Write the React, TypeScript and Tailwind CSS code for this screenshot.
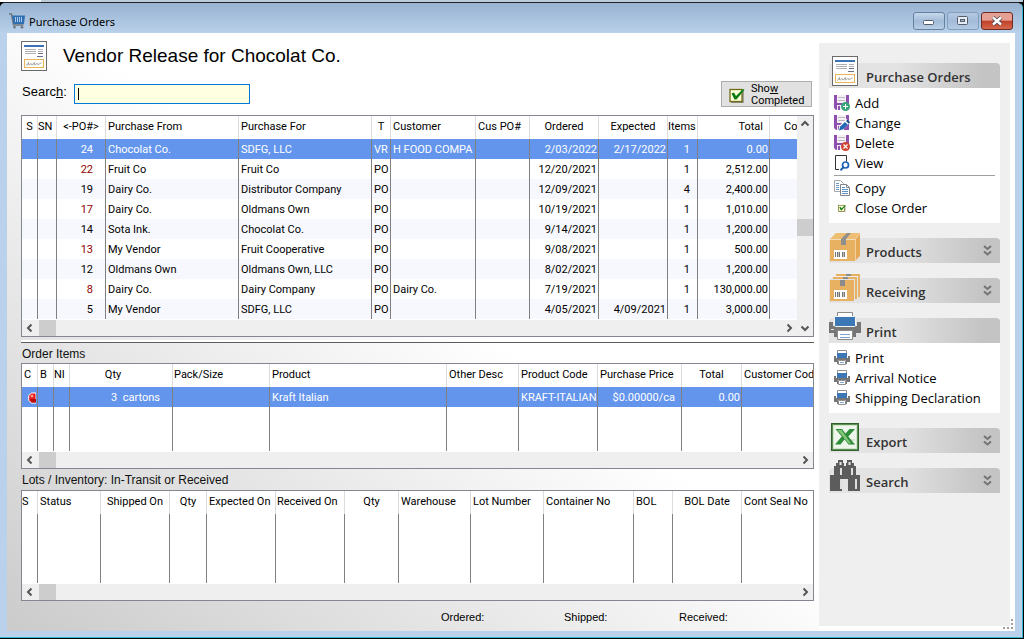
import { useState, type ReactNode } from "react";

type Column = {
  label: string;
  width?: number;
  head?: string;
  cell?: string;
};

const orderColumns: Column[] = [
  { label: "S", width: 16, head: "text-center" },
  { label: "SN", width: 19, head: "px-0" },
  { label: "<-PO#>", width: 49, head: "text-center", cell: "text-right pr-3" },
  { label: "Purchase From", width: 133 },
  { label: "Purchase For", width: 133 },
  { label: "T", width: 19, head: "text-center" },
  { label: "Customer", width: 85 },
  { label: "Cus PO#", width: 54 },
  { label: "Ordered", width: 69, head: "text-center", cell: "text-right pr-px" },
  { label: "Expected", width: 69, head: "text-center", cell: "text-right pr-px" },
  { label: "Items", width: 30, head: "px-0", cell: "text-right pr-[7px]" },
  { label: "Total", width: 72, head: "text-right pr-[6px]", cell: "text-right pr-px" },
  { label: "Co", head: "pl-[14px] pr-0" },
];

const orderRows: string[][] = [
  ["", "", "24", "Chocolat Co.", "SDFG, LLC", "VR", "H FOOD COMPA", "", "2/03/2022", "2/17/2022", "1", "0.00", ""],
  ["", "", "22", "Fruit Co", "Fruit Co", "PO", "", "", "12/20/2021", "", "1", "2,512.00", ""],
  ["", "", "19", "Dairy Co.", "Distributor Company", "PO", "", "", "12/09/2021", "", "4", "2,400.00", ""],
  ["", "", "17", "Dairy Co.", "Oldmans Own", "PO", "", "", "10/19/2021", "", "1", "1,010.00", ""],
  ["", "", "14", "Sota Ink.", "Chocolat Co.", "PO", "", "", "9/14/2021", "", "1", "1,200.00", ""],
  ["", "", "13", "My Vendor", "Fruit Cooperative", "PO", "", "", "9/08/2021", "", "1", "500.00", ""],
  ["", "", "12", "Oldmans Own", "Oldmans Own, LLC", "PO", "", "", "8/02/2021", "", "1", "1,200.00", ""],
  ["", "", "8", "Dairy Co.", "Dairy Company", "PO", "Dairy Co.", "", "7/19/2021", "", "1", "130,000.00", ""],
  ["", "", "5", "My Vendor", "SDFG, LLC", "PO", "", "", "4/05/2021", "4/09/2021", "1", "3,000.00", ""],
];

const itemColumns: Column[] = [
  { label: "C", width: 16 },
  { label: "B", width: 16 },
  { label: "NI", width: 16, head: "px-0" },
  { label: "Qty", width: 103, head: "text-center pr-4", cell: "text-right pr-3" },
  { label: "Pack/Size", width: 97, head: "px-px" },
  { label: "Product", width: 177 },
  { label: "Other Desc", width: 72 },
  { label: "Product Code", width: 79 },
  { label: "Purchase Price", width: 84, cell: "text-right pr-[6px]" },
  { label: "Total", width: 60, head: "text-center", cell: "text-right pr-px" },
  { label: "Customer Code", head: "pl-[2px] pr-0" },
];

const itemRows: ReactNode[][] = [
  [<RedLight key="c" />, "", "", "3  cartons", "", "Kraft Italian", "", "KRAFT-ITALIAN", "$0.00000/ca", "0.00", ""],
];

const lotColumns: Column[] = [
  { label: "S", width: 16, head: "px-0" },
  { label: "Status", width: 63 },
  { label: "Shipped On", width: 69, head: "text-center" },
  { label: "Qty", width: 37, head: "text-center" },
  { label: "Expected On", width: 69 },
  { label: "Received On", width: 69, head: "px-px" },
  { label: "Qty", width: 54, head: "text-center" },
  { label: "Warehouse", width: 72 },
  { label: "Lot Number", width: 73 },
  { label: "Container No", width: 90 },
  { label: "BOL", width: 39 },
  { label: "BOL Date", width: 69, head: "text-center" },
  { label: "Cont Seal No" },
];

function RedLight() {
  return (
    <svg viewBox="0 0 8 12" className="ml-1 block h-3 w-2" aria-hidden="true">
      <path d="M8 1H3.500L.700 3.500v5L3.500 11H8z" fill="#e01818" stroke="#ffffff" />
      <path d="M1.500 7H8v3.500H4z" fill="#b50d0d" />
      <circle cx="4" cy="4" r="1.500" fill="#ff9a90" />
    </svg>
  );
}

function DocIcon() {
  return (
    <svg viewBox="0 0 26 30" className="h-[30px] w-[26px]" aria-hidden="true">
      <rect x=".5" y=".5" width="25" height="29" fill="#fff" stroke="#6b6b6b" />
      <rect x="3" y="4" width="20" height="2" fill="#3a74b4" />
      <path d="M4 8.5h11M4 10.5h11M4 12.5h11M17 8.5h5M17 10.5h5" stroke="#b0b0b0" />
      <path d="M17 12.5h5M16 15.5h6" stroke="#6c6f88" />
      <rect x="3.5" y="18.5" width="19" height="8" fill="#fffefa" stroke="#e8b45a" />
      <path
        d="M5 24.5c2-1 3-3 2.500-3s-.5 2.500.5 2.500 1.500-1.500 2-1.500 0 1.500 1 1.500 1.500-2.500 2.500-2.500-1 2.500 0 2.500 1.500-1.500 2.500-1.500 0 1 1 1 2-1.500 3.500-1.500"
        fill="none"
        stroke="#777"
        strokeWidth=".7"
      />
    </svg>
  );
}

function CartIcon() {
  return (
    <svg viewBox="0 0 16 16" className="h-4 w-4" aria-hidden="true">
      <path d="M0 1h2.500l2 11h10" fill="none" stroke="#70757c" strokeWidth="1.400" />
      <path d="M3 2.500h13l-1 8.500H4.500z" fill="#2f6eb0" />
      <path d="M6.500 4v5M8.500 4v5M10.500 4v5M12.500 4v5" stroke="#a9cbee" strokeWidth="1" />
      <circle cx="5.5" cy="14.200" r="1.300" fill="#70757c" />
      <circle cx="13" cy="14.200" r="1.300" fill="#70757c" />
    </svg>
  );
}

function CheckIcon({ className }: { className: string }) {
  return (
    <svg viewBox="0 0 16 16" className={className} aria-hidden="true">
      <path d="M14 4v11.500H2" fill="none" stroke="#8a8a80" strokeWidth="1.500" />
      <rect x="1" y="2.5" width="12" height="12" fill="#ffffdc" stroke="#6e6a18" strokeWidth="1.300" />
      <path d="M2.500 6.500 5 5.500l2 3.500 7-7 1.500.800L7.500 12.500h-2z" fill="#0b7d12" />
    </svg>
  );
}

function DiskIcon({ badge }: { badge: "add" | "edit" | "remove" }) {
  return (
    <svg viewBox="0 0 16 16" className="h-4 w-4" aria-hidden="true">
      <path d="M0 0h15v15H2l-2-2z" fill="#8e4fae" />
      <rect x="3" y="0" width="9" height="8" fill="#f4f0f6" />
      <path d="M4 2.500h7M4 5.500h7" stroke="#bdb8c0" />
      <rect x="3" y="10" width="7" height="5" fill="#f4f0f6" />
      <rect x="4" y="11" width="2" height="4" fill="#8e4fae" />
      {badge === "add" && (
        <>
          <circle cx="11.5" cy="11.5" r="4.500" fill="#3aa578" />
          <path d="M11.5 9v5M9 11.5h5" stroke="#fff" />
        </>
      )}
      {badge === "remove" && (
        <>
          <circle cx="11.5" cy="11.5" r="4.500" fill="#d0452f" />
          <path d="m9.500 9.500 4 4M13.500 9.500l-4 4" stroke="#fff" strokeWidth="1.200" />
        </>
      )}
      {badge === "edit" && (
        <>
          <path d="m4 16 1.500-5.500L12.500 4 16 7.500 9.500 14z" fill="#fff" />
          <path d="m5 15.500 1.200-4L11 7l2.800 2.800-4.600 4.500z" fill="#2268b4" />
          <path d="M12 6l1.500-1.500 2.500 2.800L14.800 8.800z" fill="#174c86" />
        </>
      )}
    </svg>
  );
}

function ViewIcon() {
  return (
    <svg viewBox="0 0 16 16" className="h-4 w-4" aria-hidden="true">
      <path d="M5 14.500H1.500V.5h11v6" fill="#fff" stroke="#333" />
      <circle cx="11.5" cy="10" r="3" fill="#fff" stroke="#1c62b8" strokeWidth="1.700" />
      <path d="m9.500 12.200-3 3" stroke="#1c62b8" strokeWidth="2" />
    </svg>
  );
}

function CopyIcon() {
  return (
    <svg viewBox="0 0 16 16" className="h-4 w-4" aria-hidden="true">
      <path d="M.5.5h6l3 3v8h-9z" fill="#fff" stroke="#a5a8ac" />
      <path d="M2 3.500h3M2 5.500h3M2 7.500h3M2 9.500h3" stroke="#6b9ccc" />
      <path d="M6.500 4.500h6l3 3v8h-9z" fill="#fff" stroke="#80858b" />
      <path d="M12.500 4.500v3h3" fill="none" stroke="#80858b" />
      <path d="M8 7.500h3M8 9.500h6M8 11.500h6M8 13.500h6" stroke="#5b90c6" />
    </svg>
  );
}

function PrinterIcon() {
  return (
    <svg viewBox="0 0 32 30" className="h-[30px] w-8" aria-hidden="true">
      <path d="M0 11h4v5h24v-5h4v11h-5v4h-3v-6H8v6H5v-4H0z" fill="#767676" />
      <path d="M0 15h32v7H0z" fill="#767676" />
      <path d="M8.500 6V1.500h15V6z" fill="#fff" stroke="#8a8a8a" />
      <rect x="5.500" y="5.500" width="21" height="10" rx="1" fill="#3b78b5" stroke="#f6f6f6" />
      <path d="M8.500 19.500h15v9h-15z" fill="#fff" stroke="#8a8a8a" />
      <path d="M11 23.500h10M11 26.500h10" stroke="#7ea6cf" />
      <rect x="2" y="18" width="3" height="1" fill="#e0e0e0" />
    </svg>
  );
}

function SmallPrinterIcon() {
  return (
    <svg viewBox="0 0 16 16" className="h-4 w-4" aria-hidden="true">
      <path d="M0 6h2v2h12V6h2v6h-3v2h-1v-4H4v4H3v-2H0z" fill="#767676" />
      <path d="M3.500 4V.5h9V4" fill="#fff" stroke="#8f8f8f" />
      <rect x="3" y="3" width="10" height="5" fill="#3b78b5" />
      <path d="M4.500 10.500h7v4h-7z" fill="#fff" stroke="#8f8f8f" />
      <path d="M6 12.500h4" stroke="#7ea6cf" />
    </svg>
  );
}

function Barcode() {
  return (
    <>
      <rect x="4" y="17" width="13" height="9" fill="#fff" />
      <path d="M5.5 19v5M7.500 19v5M9.500 19v5M12.500 19v5M14.500 19v5" stroke="#777" />
      <path d="M8.500 19v5M13.500 19v5" stroke="#bbb" />
    </>
  );
}

function BoxIcon() {
  return (
    <svg viewBox="0 0 30 28" className="h-7 w-[30px]" aria-hidden="true">
      <path d="M0 6 6 0h24l-5 6z" fill="#edbd72" />
      <path d="m25 6 5-6v23l-5 5z" fill="#e3a957" />
      <path d="M0 6.500h25M25.500 6v22M25.500 6l4-5" fill="none" stroke="#f6dcae" strokeWidth=".800" />
      <path d="M0 7h25v21H0z" fill="#e7b161" />
      <path d="m11 6 6-6h4l-5 6v6h-5z" fill="#8f8f8f" />
      <Barcode />
    </svg>
  );
}

function BoxesIcon() {
  return (
    <svg viewBox="0 0 30 28" className="h-7 w-[30px]" aria-hidden="true">
      <path d="M6 1h24v23h-2V3H6z" fill="#e7b161" />
      <path d="M3 4h24v22h-2V6H3z" fill="#e7b161" />
      <path d="M16 1h5v2h-5zM13 4h5v2h-5z" fill="#8b8b8b" />
      <rect y="7" width="24" height="21" fill="#e7b161" />
      <rect x="10" y="7" width="5" height="6" fill="#8b8b8b" />
      <Barcode />
    </svg>
  );
}

function ExcelIcon() {
  return (
    <svg viewBox="0 0 28 28" className="h-7 w-7" aria-hidden="true">
      <rect x=".5" y=".5" width="27" height="27" fill="#5b8f54" stroke="#2f5f2c" />
      <rect x="2.500" y="2.500" width="23" height="23" fill="#eef5eb" stroke="#cfe3c9" />
      <path d="M17 16h7v2h-7zM17 20h7v2h-7z" fill="#d6e4d2" />
      <path d="M4.500 6h6.500l3.500 4.500L18.500 6H24l-6.700 7.500L24 21.500h-6.500l-4-5-4 5H4l6.800-8z" fill="#2f8d3a" />
      <path d="M6.500 7h4l9.500 13.500h-2.500z" fill="#83c57a" />
    </svg>
  );
}

function BinocularsIcon() {
  return (
    <svg viewBox="0 0 30 31" className="h-[31px] w-[30px]" aria-hidden="true">
      <path
        d="M8 0h5v3h1v3h2V3h1V0h5v3h2v3h2v9h4v16H18V19h-6v12H0V15h4V6h2V3h2z"
        fill="#5c5c5c"
      />
      <path d="M9.500 2h2v3h-2zM18.500 2h2v3h-2z" fill="#e8e8e8" />
      <path d="M11 8v7M22 8v7M11 19v10M26 19v10" stroke="#fff" strokeWidth="1.600" />
    </svg>
  );
}

function DoubleChevron() {
  return (
    <svg viewBox="0 0 9 12" className="h-3 w-[9px]" aria-hidden="true">
      <path d="m1 1 3.500 3L8 1M1 6.500l3.500 3L8 6.500" fill="none" stroke="#747474" strokeWidth="2" />
    </svg>
  );
}

const arrowPaths = {
  left: "M6.5 1.500 3 5l3.500 3.500",
  right: "M3.500 1.500 7 5 3.500 8.500",
  up: "M1.500 6.500 5 3l3.500 3.500",
  down: "M1.500 3.500 5 7l3.500-3.500",
};

function ArrowButton({ direction }: { direction: keyof typeof arrowPaths }) {
  return (
    <button type="button" aria-label={`Scroll ${direction}`} className="flex h-4 w-4 items-center justify-center">
      <svg viewBox="0 0 10 10" className="h-[10px] w-[10px]" aria-hidden="true">
        <path d={arrowPaths[direction]} fill="none" stroke="#555" strokeWidth="2" />
      </svg>
    </button>
  );
}

type GridProps = {
  label: string;
  columns: Column[];
  rows: ReactNode[][];
  filler?: string;
  vertical?: boolean;
};

function DataGrid({ label, columns, rows, filler, vertical }: GridProps) {
  const [selected, setSelected] = useState(0);
  const last = columns.length - 1;
  const bodyLine = (i: number) => (i < last ? "border-r border-[#808080]" : "");
  return (
    <div className="flex border border-[#828790] bg-white">
      <div className="flex min-w-0 flex-1 flex-col">
        <table
          aria-label={label}
          className="w-full table-fixed border-separate border-spacing-0 font-[Roboto,sans-serif] text-[11px] text-black"
        >
          <colgroup>
            {columns.map((column, i) => (
              <col key={i} style={column.width ? { width: column.width } : undefined} />
            ))}
          </colgroup>
          <thead>
            <tr className="h-[23px]">
              {columns.map((column, i) => (
                <th
                  key={i}
                  scope="col"
                  className={`overflow-hidden whitespace-nowrap py-0 font-normal ${
                    i < last ? "border-r border-[#dcdcdc]" : ""
                  } ${column.head?.includes("text-") ? "" : "text-left"} ${column.head ?? ""} ${
                    column.head?.includes("p") ? "" : "px-[2px]"
                  }`}
                >
                  {column.label}
                </th>
              ))}
            </tr>
          </thead>
          <tbody>
            {rows.map((row, r) => {
              const active = r === selected;
              return (
                <tr
                  key={r}
                  aria-selected={active}
                  onClick={() => setSelected(r)}
                  className={active ? "bg-[#6495ed] text-white" : r % 2 === 0 ? "bg-[#f7f8fe]" : "bg-white"}
                >
                  {row.map((value, i) => (
                    <td
                      key={i}
                      className={`h-5 overflow-hidden whitespace-pre px-[2px] pb-0 pt-[2px] leading-[18px] ${bodyLine(i)} ${
                        columns[i].cell ?? ""
                      } ${columns[i].label === "<-PO#>" && r % 2 === 1 && !active ? "text-[#900000]" : ""}`}
                    >
                      {value}
                    </td>
                  ))}
                </tr>
              );
            })}
            {filler && (
              <tr className={filler}>
                {columns.map((_, i) => (
                  <td key={i} className={`p-0 ${bodyLine(i)}`} />
                ))}
              </tr>
            )}
          </tbody>
        </table>
        <div className="mt-px flex h-4 items-center bg-[#efefef]">
          <ArrowButton direction="left" />
          <div className="ml-px h-full w-[17px] bg-[#cdcdcd]" />
          <div className="flex-1" />
          <ArrowButton direction="right" />
        </div>
      </div>
      {vertical && (
        <div className="flex w-4 flex-col bg-[#efefef]">
          <ArrowButton direction="up" />
          <div className="flex-[86]" />
          <div className="h-[17px] bg-[#cdcdcd]" />
          <div className="flex-[84]" />
          <ArrowButton direction="down" />
        </div>
      )}
    </div>
  );
}

function Section({ title, icon, children }: { title: string; icon: ReactNode; children?: ReactNode }) {
  return (
    <section>
      <h2 className="relative">
        <button
          type="button"
          className="flex h-[25px] w-full items-center justify-between rounded-t-[4px] bg-linear-to-r from-[#e3e3e3] from-40% to-[#c4c4c4] to-90% pl-[37px] pr-2 text-left text-[13px] font-semibold text-[#333]"
        >
          <span className="pt-1">{title}</span>
          {!children && <DoubleChevron />}
        </button>
        <span className="pointer-events-none absolute bottom-[2px] left-0 flex w-8 justify-center">{icon}</span>
      </h2>
      {children && <div className="bg-white px-[5px] py-[5px]">{children}</div>}
    </section>
  );
}

function Action({ icon, label }: { icon: ReactNode; label: string }) {
  return (
    <button type="button" className="flex h-5 w-full items-center gap-[5px] text-left text-[13px] leading-5 text-black">
      <span className="flex w-4 justify-center">{icon}</span>
      {label}
    </button>
  );
}

function WindowButton({ label, tone, children }: { label: string; tone: string; children: ReactNode }) {
  return (
    <button
      type="button"
      aria-label={label}
      className={`flex h-[18px] w-8 items-center justify-center rounded-[3px] border ${tone}`}
    >
      {children}
    </button>
  );
}

export default function App() {
  const [query, setQuery] = useState("");
  return (
    <div className="flex min-h-screen flex-col bg-black pb-px pr-px font-['Liberation_Sans',Arial,sans-serif]">
      <div className="flex h-[2px] bg-[#bccbd9]">
        <div className="w-[41px] bg-white" />
      </div>
      <div className="flex flex-1 flex-col rounded-t-[6px] border border-l-0 border-b-[#35b8d0] border-r-[#35b8d0] border-t-[#222] bg-[#b9d1ea]">
        <header className="flex h-[30px] items-center rounded-t-[5px] bg-linear-to-b from-[#98b2d1] to-[#b9d1ea] pl-[9px] pr-[9px] pt-[6px]">
          <CartIcon />
          <h1 className="ml-1 flex-1 pt-px font-['Noto_Sans',sans-serif] text-[11px] leading-4 text-black">Purchase Orders</h1>
          <div className="flex gap-[2px]">
            <WindowButton label="Minimize" tone="border-[#66809f] bg-linear-to-b from-[#c6d8ec] via-[#a3bbd8] to-[#b9cfe6]">
              <svg viewBox="0 0 12 6" className="mt-1 h-[6px] w-3" aria-hidden="true">
                <rect x=".5" y=".5" width="10" height="4" rx="1" fill="#fff" stroke="#555c68" />
              </svg>
            </WindowButton>
            <WindowButton label="Restore" tone="border-[#839dbd] bg-linear-to-b from-[#b5cae2] via-[#a3bbd8] to-[#b3cae4]">
              <svg viewBox="0 0 12 10" className="h-[10px] w-3" aria-hidden="true">
                <rect x=".5" y=".5" width="10" height="8" rx="1" fill="#e6edf5" stroke="#555c68" />
                <rect x="3.500" y="3.500" width="4" height="2" fill="#a3bbd8" stroke="#555c68" />
              </svg>
            </WindowButton>
            <WindowButton label="Close" tone="border-[#6e2a24] bg-linear-to-b from-[#e5a093] from-45% via-[#bf4028] via-50% to-[#d5684b]">
              <svg viewBox="0 0 12 10" className="h-[10px] w-3" aria-hidden="true">
                <path d="m2 1.500 8 7M10 1.500l-8 7" stroke="#4a4550" strokeWidth="4" />
                <path d="m2 1.500 8 7M10 1.500l-8 7" stroke="#fff" strokeWidth="2.400" />
              </svg>
            </WindowButton>
          </div>
        </header>

        <div className="relative mb-[6px] ml-[7px] mr-[7px] flex flex-1 bg-[linear-gradient(36deg,#cbcbcb_0px,#ffffff_523px)]">
          <main className="min-w-0 flex-1 pl-[14px] pr-[5px] pt-2">
            <div className="flex items-center gap-4">
              <DocIcon />
              <h2 className="text-[19px] leading-7 text-black">Vendor Release for Chocolat Co.</h2>
            </div>

            <div className="mt-[10px] flex h-[26px] items-center">
              <label htmlFor="search" className="w-[53px] pb-1 pl-px text-[13px] leading-4 text-black">
                Searc<span className="underline">h</span>:
              </label>
              <div className="relative">
                <input
                  id="search"
                  type="text"
                  value={query}
                  onChange={(event) => setQuery(event.target.value)}
                  className="block h-5 w-[176px] border border-[#0078d7] bg-[#ffffe1] px-1 text-xs outline-none"
                />
                {query === "" && <span className="pointer-events-none absolute left-1 top-1 h-3 w-px bg-black" />}
              </div>
              <button
                type="button"
                className="ml-auto mr-[2px] flex h-[26px] w-[91px] items-center gap-[6px] border border-[#adadad] bg-[#e1e1e1] pl-[7px] pt-[2px] text-left font-[Roboto,sans-serif] text-[11px] leading-3 text-black"
              >
                <CheckIcon className="h-4 w-4" />
                <span>
                  Sho<span className="underline">w</span>
                  <br />
                  Completed
                </span>
              </button>
            </div>

            <div className="mt-2">
              <DataGrid label="Purchase orders" columns={orderColumns} rows={orderRows} vertical />
            </div>

            <div className="mt-[3px] h-[3px] border-b border-[#5c5c5c] bg-white" />

            <h3 className="pl-px pt-[2px] text-[12px] leading-[18px] text-[#101010]">Order Items</h3>
            <DataGrid label="Order items" columns={itemColumns} rows={itemRows} filler="h-11" />

            <h3 className="pb-px pl-px pt-[2px] text-[12px] leading-[18px] text-[#101010]">
              Lots / Inventory: In-Transit or Received
            </h3>
            <DataGrid label="Lots and inventory" columns={lotColumns} rows={[]} filler="h-[69px]" />

            <div className="flex h-[30px] items-center pl-[420px] pt-[2px] text-[11px] text-black">
              <span className="w-[123px]">Ordered:</span>
              <span className="w-[115px]">Shipped:</span>
              <span>Received:</span>
            </div>
          </main>

          <div className="flex bg-white pb-[5px] pr-[5px] pt-[10px]">
            <aside className="flex w-[191px] flex-col gap-[15px] bg-[#efefef] px-[10px] pt-5 font-['Open_Sans','Noto_Sans',sans-serif]">
              <Section title="Purchase Orders" icon={<DocIcon />}>
                <Action icon={<DiskIcon badge="add" />} label="Add" />
                <Action icon={<DiskIcon badge="edit" />} label="Change" />
                <Action icon={<DiskIcon badge="remove" />} label="Delete" />
                <Action icon={<ViewIcon />} label="View" />
                <hr className="mb-[2px] mt-[2px] border-t border-[#a0a0a0]" />
                <Action icon={<CopyIcon />} label="Copy" />
                <Action icon={<CheckIcon className="h-2 w-2" />} label="Close Order" />
              </Section>
              <Section title="Products" icon={<BoxIcon />} />
              <Section title="Receiving" icon={<BoxesIcon />} />
              <Section title="Print" icon={<PrinterIcon />}>
                <Action icon={<SmallPrinterIcon />} label="Print" />
                <Action icon={<SmallPrinterIcon />} label="Arrival Notice" />
                <Action icon={<SmallPrinterIcon />} label="Shipping Declaration" />
              </Section>
              <Section title="Export" icon={<ExcelIcon />} />
              <Section title="Search" icon={<BinocularsIcon />} />
            </aside>
          </div>

          <svg viewBox="0 0 10 10" className="absolute bottom-[2px] right-[2px] h-[10px] w-[10px]" aria-hidden="true">
            <path d="M8 0h2v2H8zM8 4h2v2H8zM8 8h2v2H8zM4 8h2v2H4zM0 8h2v2H0z" fill="#a0a0a0" />
          </svg>
        </div>
      </div>
    </div>
  );
}
